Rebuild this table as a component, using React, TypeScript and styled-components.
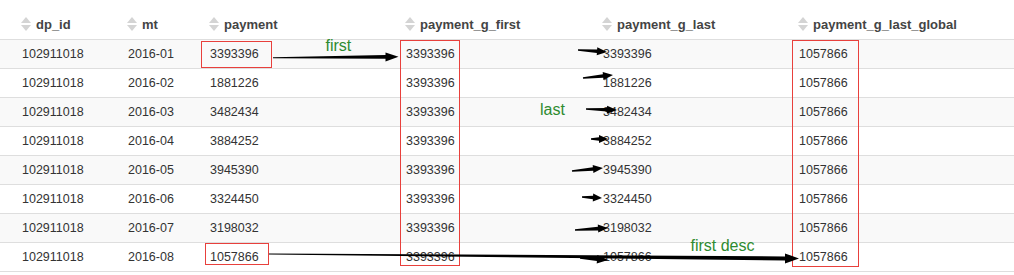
import React from 'react'
import styled, { createGlobalStyle } from 'styled-components'

const GlobalStyle = createGlobalStyle`
  html, body {
    margin: 0;
    padding: 0;
    background: #ffffff;
  }
  body {
    font-family: 'Liberation Sans', Arial, sans-serif;
  }
`

const columns = [
  'dp_id',
  'mt',
  'payment',
  'payment_g_first',
  'payment_g_last',
  'payment_g_last_global',
]

const rows = [
  ['102911018', '2016-01', '3393396', '3393396', '3393396', '1057866'],
  ['102911018', '2016-02', '1881226', '3393396', '1881226', '1057866'],
  ['102911018', '2016-03', '3482434', '3393396', '3482434', '1057866'],
  ['102911018', '2016-04', '3884252', '3393396', '3884252', '1057866'],
  ['102911018', '2016-05', '3945390', '3393396', '3945390', '1057866'],
  ['102911018', '2016-06', '3324450', '3393396', '3324450', '1057866'],
  ['102911018', '2016-07', '3198032', '3393396', '3198032', '1057866'],
  ['102911018', '2016-08', '1057866', '3393396', '1057866', '1057866'],
]

const Wrap = styled.div`
  position: relative;
  width: 1014px;
  height: 275px;
  overflow: hidden;
`

const Row = styled.div<{ $head?: boolean; $striped?: boolean }>`
  display: grid;
  grid-template-columns: 106px 82px 196px 197px 196px 1fr;
  align-items: center;
  box-sizing: border-box;
  height: ${(p) => (p.$head ? '40px' : '29px')};
  padding-top: ${(p) => (p.$head ? '9px' : '0')};
  border-bottom: 1px solid #dedede;
  background: ${(p) => (p.$striped ? '#f9f9f9' : '#ffffff')};
`

const HeadCell = styled.div`
  display: flex;
  align-items: center;
  gap: 5px;
  padding-left: 21px;
  font-size: 13px;
  font-weight: bold;
  color: #444444;
  white-space: nowrap;
`

const Cell = styled.div`
  padding-left: 22px;
  font-size: 12.5px;
  color: #333333;
  white-space: nowrap;
`

const Overlay = styled.svg`
  position: absolute;
  left: 0;
  top: 0;
  pointer-events: none;
`

const Note = styled.span<{ $x: number; $y: number }>`
  position: absolute;
  left: ${(p) => p.$x}px;
  top: ${(p) => p.$y}px;
  font-family: 'Liberation Sans', Arial, sans-serif;
  font-size: 16px;
  line-height: 16px;
  color: #2e8b30;
  white-space: nowrap;
`

const SortIcon = () => (
  <svg width='10' height='14' viewBox='0 0 10 14'>
    <polygon points='5,0 10,6 0,6' fill='#d4d4d4' />
    <polygon points='0,8 10,8 5,14' fill='#d4d4d4' />
  </svg>
)

// tapered hand-drawn arrow: thin tail, thicker shaft, filled head
const arrow = (
  x1: number,
  y1: number,
  x2: number,
  y2: number,
  head = 10,
  hw = 4,
  w0 = 0.7,
  w1 = 1.8
) => {
  const len = Math.hypot(x2 - x1, y2 - y1)
  const ux = (x2 - x1) / len
  const uy = (y2 - y1) / len
  const nx = -uy
  const ny = ux
  const bx = x2 - ux * head
  const by = y2 - uy * head
  const pts = [
    [x1 + nx * w0, y1 + ny * w0],
    [bx + nx * w1, by + ny * w1],
    [bx + nx * hw, by + ny * hw],
    [x2, y2],
    [bx - nx * hw, by - ny * hw],
    [bx - nx * w1, by - ny * w1],
    [x1 - nx * w0, y1 - ny * w0],
  ]
  return pts.map((p) => p[0].toFixed(1) + ',' + p[1].toFixed(1)).join(' ')
}

const arrows = [
  arrow(273, 57.7, 398.5, 56.8, 13, 4.5, 0.5, 1.8),
  arrow(578, 50, 607, 52),
  arrow(583, 78, 613, 75),
  arrow(586, 109, 617, 110),
  arrow(591, 139, 608, 139, 9),
  arrow(572, 171, 603, 168),
  arrow(582, 197, 602, 198, 9),
  arrow(575, 230, 608, 228),
  arrow(580, 258, 608, 260, 11, 4.2),
  arrow(269, 254, 799, 258.5, 14, 5, 0.5, 2),
]

const boxes = [
  { x: 201.5, y: 41.5, w: 70, h: 26 },
  { x: 400.5, y: 40.5, w: 59, h: 225 },
  { x: 792.5, y: 40.5, w: 66, h: 226 },
  { x: 205.5, y: 243.5, w: 63, h: 21 },
]

export default function App() {
  return (
    <>
      <GlobalStyle />
      <Wrap>
        <Row $head>
          {columns.map((c) => (
            <HeadCell key={c}>
              <SortIcon />
              <span>{c}</span>
            </HeadCell>
          ))}
        </Row>
        {rows.map((r, i) => (
          <Row key={i} $striped={i % 2 === 0}>
            {r.map((v, j) => (
              <Cell key={j}>{v}</Cell>
            ))}
          </Row>
        ))}
        <Overlay width='1014' height='275' viewBox='0 0 1014 275'>
          {boxes.map((b, i) => (
            <rect
              key={i}
              x={b.x}
              y={b.y}
              width={b.w}
              height={b.h}
              fill='none'
              stroke='#e8403c'
              strokeWidth='1'
            />
          ))}
          {arrows.map((p, i) => (
            <polygon key={i} points={p} fill='#000000' />
          ))}
        </Overlay>
        <Note $x={325.5} $y={37.5}>first</Note>
        <Note $x={540} $y={101.5}>last</Note>
        <Note $x={690.5} $y={237.5}>first desc</Note>
      </Wrap>
    </>
  )
}
